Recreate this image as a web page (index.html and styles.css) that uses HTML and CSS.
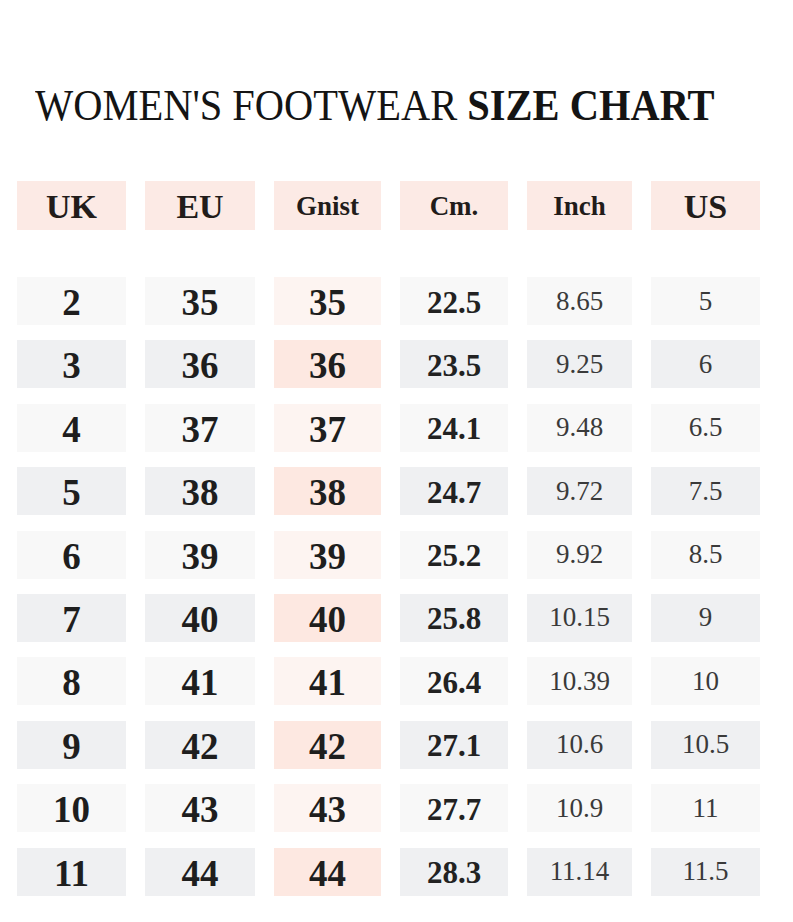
FILE: index.html
```html
<!DOCTYPE html>
<html lang="en">
<head>
<meta charset="utf-8">
<title>Women's Footwear Size Chart</title>
<link rel="stylesheet" href="styles.css">
</head>
<body>
<main class="page">
  <h1 class="title"><span class="title-text">WOMEN'S FOOTWEAR <b>SIZE CHART</b></span></h1>

  <div class="grid head">
    <div class="cell hcell big">UK</div>
    <div class="cell hcell big">EU</div>
    <div class="cell hcell small">Gnist</div>
    <div class="cell hcell small">Cm.</div>
    <div class="cell hcell small">Inch</div>
    <div class="cell hcell big">US</div>
  </div>

  <div class="grid body">
    <div class="cell light b-lg">2</div><div class="cell light b-lg">35</div><div class="cell light-pink b-lg">35</div><div class="cell light b-md">22.5</div><div class="cell light reg">8.65</div><div class="cell light reg">5</div>
    <div class="cell gray b-lg">3</div><div class="cell gray b-lg">36</div><div class="cell pink b-lg">36</div><div class="cell gray b-md">23.5</div><div class="cell gray reg">9.25</div><div class="cell gray reg">6</div>
    <div class="cell light b-lg">4</div><div class="cell light b-lg">37</div><div class="cell light-pink b-lg">37</div><div class="cell light b-md">24.1</div><div class="cell light reg">9.48</div><div class="cell light reg">6.5</div>
    <div class="cell gray b-lg">5</div><div class="cell gray b-lg">38</div><div class="cell pink b-lg">38</div><div class="cell gray b-md">24.7</div><div class="cell gray reg">9.72</div><div class="cell gray reg">7.5</div>
    <div class="cell light b-lg">6</div><div class="cell light b-lg">39</div><div class="cell light-pink b-lg">39</div><div class="cell light b-md">25.2</div><div class="cell light reg">9.92</div><div class="cell light reg">8.5</div>
    <div class="cell gray b-lg">7</div><div class="cell gray b-lg">40</div><div class="cell pink b-lg">40</div><div class="cell gray b-md">25.8</div><div class="cell gray reg">10.15</div><div class="cell gray reg">9</div>
    <div class="cell light b-lg">8</div><div class="cell light b-lg">41</div><div class="cell light-pink b-lg">41</div><div class="cell light b-md">26.4</div><div class="cell light reg">10.39</div><div class="cell light reg">10</div>
    <div class="cell gray b-lg">9</div><div class="cell gray b-lg">42</div><div class="cell pink b-lg">42</div><div class="cell gray b-md">27.1</div><div class="cell gray reg">10.6</div><div class="cell gray reg">10.5</div>
    <div class="cell light b-lg">10</div><div class="cell light b-lg">43</div><div class="cell light-pink b-lg">43</div><div class="cell light b-md">27.7</div><div class="cell light reg">10.9</div><div class="cell light reg">11</div>
    <div class="cell gray b-lg">11</div><div class="cell gray b-lg">44</div><div class="cell pink b-lg">44</div><div class="cell gray b-md">28.3</div><div class="cell gray reg">11.14</div><div class="cell gray reg">11.5</div>
  </div>
</main>
</body>
</html>
```
FILE: styles.css
```css
html, body {
  margin: 0;
  padding: 0;
  background: #ffffff;
}

body {
  font-family: "Liberation Serif", "DejaVu Serif", serif;
  color: #1c1c1c;
}

.page {
  width: 793px;
  padding-top: 84px;
}

.title {
  margin: 0 0 53px 35px;
  font-size: 44px;
  line-height: 1;
  font-weight: 400;
  white-space: nowrap;
  color: #141414;
}

.title-text {
  display: inline-block;
  transform: scaleX(0.92);
  transform-origin: left center;
}

.title b {
  font-weight: 700;
}

.grid {
  display: grid;
  grid-template-columns: 109px 110px 107px 108px 105px 109px;
  column-gap: 19px;
  margin-left: 17px;
}

.head {
  grid-auto-rows: 49px;
  margin-bottom: 47px;
}

.body {
  grid-auto-rows: 48px;
  row-gap: 15.4px;
}

.cell {
  display: flex;
  align-items: center;
  justify-content: center;
  line-height: 1;
}

.hcell {
  background: #fceae5;
  font-weight: 700;
  color: #221c1a;
}

.hcell.big {
  font-size: 34px;
  padding-top: 2px;
}

.hcell.small {
  font-size: 27px;
  padding-top: 2px;
}

.light { background: #f8f8f8; }
.light-pink { background: #fdf4f1; }
.gray { background: #eff0f2; }
.pink { background: #fde8e1; }

.b-lg {
  font-size: 37px;
  font-weight: 700;
  color: #1e1e1e;
  padding-top: 3px;
}

.b-md {
  font-size: 31px;
  font-weight: 700;
  color: #222222;
  padding-top: 2px;
}

.reg {
  font-size: 27px;
  font-weight: 400;
  color: #3a3a3a;
}
```
